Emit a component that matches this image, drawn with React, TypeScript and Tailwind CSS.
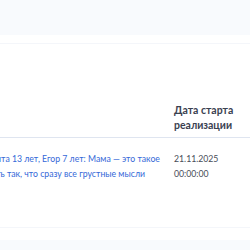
import React from "react";

const rows = [
  {
    line1: "Никита 13 лет, Егор 7 лет: Мама — это такое",
    line2: "обнять так, что сразу все грустные мысли",
    date: "21.11.2025",
    time: "00:00:00",
  },
];

const App: React.FC = () => {
  return (
    <div className="w-[250px] h-[250px] overflow-hidden bg-[#f8fafd] font-['Lato',sans-serif]">
      <div className="h-[35px]" />
      <div className="bg-white h-[205px] flex flex-col">
        <div className="h-[8px]" />
        <div className="h-px bg-[#f4f6fa]" />
        <div className="flex-1 flex flex-col">
          <div className="h-[59px]" />
          <div className="flex h-[35px] border-b border-[#dfe5f0]">
            <div className="w-[174px] shrink-0" />
            <div className="text-[10.5px] leading-[15px] font-bold text-[#3a4150]">
              Дата старта
              <br />
              реализации
            </div>
          </div>
          {rows.map((row) => (
            <div key={row.date} className="flex pt-[13px]">
              <div className="w-[174px] shrink-0 overflow-hidden text-[8.7px] leading-[15px] text-[#3468d8]">
                <div className="ml-[-20px] whitespace-nowrap">{row.line1}</div>
                <div className="ml-[-23px] whitespace-nowrap">{row.line2}</div>
              </div>
              <div className="text-[8.7px] leading-[15px] text-[#474c57]">
                <div>{row.date}</div>
                <div>{row.time}</div>
              </div>
            </div>
          ))}
          <div className="flex-1" />
          <div className="h-px bg-[#f4f6fa] mb-[12px]" />
        </div>
      </div>
    </div>
  );
};

export default App;
